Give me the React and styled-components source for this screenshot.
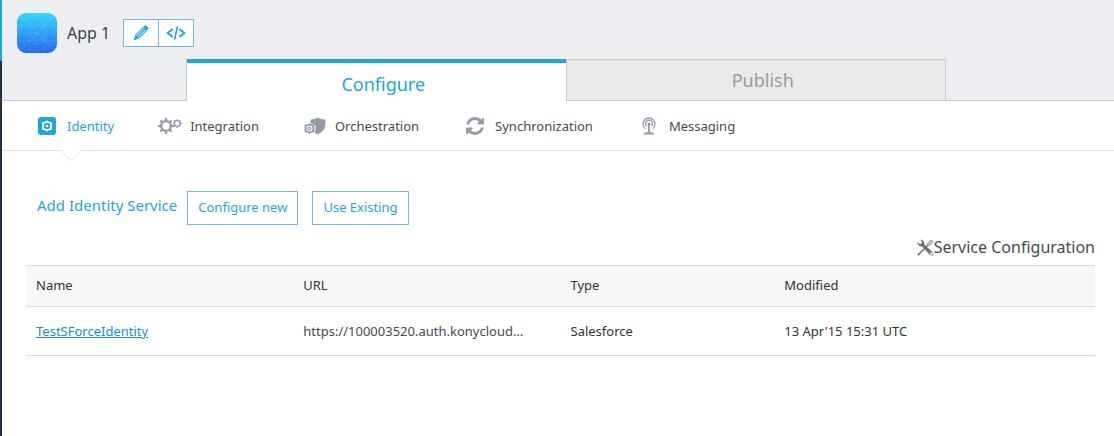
import React from "react";
import styled, { createGlobalStyle } from "styled-components";

const color = {
  accent: "#1ea5da",
  outline: "#74b9e2",
  header: "#edeef2",
  line: "#c6c8ca",
  text: "#4a4a4a",
  icon: "#949ca8",
};

const GlobalStyle = createGlobalStyle`
  *, *::before, *::after { box-sizing: border-box; }
  body { margin: 0; background: #fff; }
  body, button { font-family: "Noto Sans", "Open Sans", sans-serif; }
  h1, h2, p { margin: 0; font-weight: 400; }
  svg { display: block; }
`;

const Page = styled.div`
  display: flex;
  min-height: 100vh;
`;

const Rail = styled.div`
  flex: none;
  width: 2px;
  background: linear-gradient(${color.accent} 61px, #232f3e 61px);
`;

const Main = styled.main`
  flex: 1;
  min-width: 0;
`;

const Header = styled.header`
  background: ${color.header};
`;

const TitleBar = styled.div`
  display: flex;
  align-items: center;
  height: 59px;
  padding: 7px 15px 0;
`;

const AppName = styled.h1`
  margin: 0 13px 0 10px;
  font-size: 16px;
  line-height: 24px;
  color: #3a4149;
`;

const IconButton = styled.button`
  display: flex;
  align-items: center;
  justify-content: center;
  width: 36px;
  height: 28px;
  padding: 0;
  border: 1px solid ${color.outline};
  background: #fff;
  color: ${color.accent};

  & + & {
    margin-left: -1px;
  }
`;

const Tabs = styled.nav`
  display: flex;
  height: 42px;

  &::before,
  &::after {
    content: "";
    flex: none;
    width: 184px;
    border-bottom: 1px solid ${color.line};
  }

  &::after {
    width: 168px;
  }
`;

const Tab = styled.button`
  flex: 1;
  padding: 0 0 0 14px;
  font-size: 18px;
  line-height: 24px;
  border: 1px solid ${color.line};
  background: ${(p) => (p.$active ? "#fff" : "#eaeaea")};
  color: ${(p) => (p.$active ? color.accent : "#9c9c9c")};
  ${(p) =>
    p.$active &&
    `border-width: 0 0 0 1px;
     box-shadow: inset 0 4px ${color.accent};
     padding-top: 8px;`}
`;

const SubNav = styled.nav`
  display: flex;
  gap: 44px;
  height: 50px;
  padding: 0 33px;
  border-bottom: 1px solid #e2e2e2;
`;

const SubNavLink = styled.a`
  position: relative;
  display: flex;
  align-items: center;
  gap: 8px;
  font-size: 13px;
  line-height: 20px;
  text-decoration: none;
  white-space: nowrap;
  color: ${(p) => (p.$active ? color.accent : color.text)};
`;

const IconSlot = styled.span`
  display: flex;
  flex: none;
  justify-content: center;
  width: 24px;
  color: ${color.icon};
`;

const Notch = styled.svg`
  position: absolute;
  left: 26px;
  top: 49px;
`;

const Content = styled.section`
  padding: 40px 19px 0 24px;
`;

const AddRow = styled.div`
  display: flex;
  padding-left: 11px;
`;

const AddTitle = styled.h2`
  margin-right: 10px;
  font-size: 15px;
  line-height: 28px;
  color: ${color.accent};
`;

const OutlineButton = styled.button`
  height: 34px;
  padding: 0 10px 2px;
  font-size: 13px;
  line-height: 20px;
  border: 1px solid ${color.outline};
  background: #fff;
  color: ${color.accent};

  & + & {
    margin-left: 14px;
  }
`;

const ConfigTitle = styled.p`
  display: flex;
  align-items: center;
  justify-content: flex-end;
  margin: 10px 0 6px;
  font-size: 16px;
  line-height: 24px;
  color: ${color.text};
`;

const Table = styled.table`
  width: 100%;
  table-layout: fixed;
  border-collapse: separate;
  border-spacing: 0;
  font-size: 13px;
  line-height: 20px;
  color: #333;
`;

const HeadCell = styled.th`
  width: ${(p) => p.$width};
  height: 42px;
  padding: 0 10px 2px;
  border: solid #d9d9d9;
  border-width: 1px 0;
  background: #f7f7f7;
  font-weight: 400;
  text-align: left;
`;

const Cell = styled.td`
  height: 49px;
  padding: 0 10px;
  border-bottom: 1px solid #d9d9d9;
  color: ${(p) => (p.$muted ? color.text : "inherit")};
  white-space: nowrap;
`;

const ServiceLink = styled.a`
  color: #1b8fc6;
  text-decoration: underline;
`;

function AppIcon() {
  return (
    <svg width="40" height="40" viewBox="0 0 40 40" aria-hidden="true">
      <defs>
        <linearGradient id="appFill" x1="0" y1="0" x2="0" y2="1">
          <stop offset="0" stopColor="#31d6fb" />
          <stop offset="1" stopColor="#2767ee" />
        </linearGradient>
        <clipPath id="appClip">
          <rect width="40" height="40" rx="9" />
        </clipPath>
      </defs>
      <g clipPath="url(#appClip)">
        <rect width="40" height="40" fill="url(#appFill)" />
        <g fill="none" stroke="#fff" strokeOpacity=".13" strokeWidth=".7">
          <path d="M0 0l40 40M40 0L0 40M20 0v40M0 20h40M12.500 0v40M27.500 0v40M0 12.500h40M0 27.500h40" strokeOpacity=".09" />
          <path d="M0 0l40 40M40 0L0 40" />
          <circle cx="20" cy="20" r="18" />
          <circle cx="20" cy="20" r="11" />
          <circle cx="20" cy="20" r="7" />
        </g>
      </g>
    </svg>
  );
}

function PencilIcon() {
  return (
    <svg width="16" height="16" viewBox="0 0 16 16" aria-hidden="true">
      <path d="M.8 15.300l1.300-4.700 3.300 3.200z" fill="currentColor" />
      <path d="M2.300 10.400L10.100 2.300l3.500 3.400-7.800 7.900z" fill="#8fcfea" stroke="currentColor" />
      <path d="M4.100 11.900l7.700-7.800" stroke="currentColor" strokeWidth=".9" />
      <path d="M10.300 2l1.500-1.400q.6-.5 1.200 0l2.200 2.200q.5.600 0 1.200L13.900 5.500z" fill="currentColor" />
    </svg>
  );
}

function CodeIcon() {
  return (
    <svg width="20" height="16" viewBox="0 0 20 16" aria-hidden="true" fill="none" stroke="currentColor" strokeWidth="2">
      <path d="M6.700 4L1.700 8l5 4M13.300 4l5 4-5 4" />
      <path d="M11.400 1.500L8.600 14.500" strokeWidth="1.600" />
    </svg>
  );
}

function gearPath(cx, cy, outer, inner, teeth) {
  const step = (Math.PI * 2) / teeth;
  const at = (r, a) => `${cx + r * Math.sin(a)} ${cy - r * Math.cos(a)}`;
  const points = [];
  for (let i = 0; i < teeth; i += 1) {
    const a = i * step;
    points.push(at(inner, a - step * 0.28), at(outer, a - step * 0.16), at(outer, a + step * 0.16), at(inner, a + step * 0.28));
  }
  return `M${points.join("L")}Z`;
}

function circlePath(cx, cy, r) {
  return `M${cx - r} ${cy}a${r} ${r} 0 1 0 ${2 * r} 0a${r} ${r} 0 1 0 ${-2 * r} 0Z`;
}

function IdentityIcon() {
  return (
    <svg width="18" height="18" viewBox="0 0 18 18" aria-hidden="true">
      <rect width="18" height="18" rx="3" fill={color.accent} />
      <path
        d={"M9 3.200l1.500 1.300 3.500.9v7.200l-3.500.9L9 14.800l-1.500-1.300-3.500-.9V5.400l3.500-.9z" + circlePath(9, 9, 3.200)}
        fill="#fff"
        fillRule="evenodd"
      />
      <circle cx="9" cy="9" r="1.300" fill="#fff" />
    </svg>
  );
}

function GearsIcon() {
  return (
    <svg width="24" height="16" viewBox="0 0 24 16" aria-hidden="true" fill="currentColor" fillRule="evenodd">
      <path d={gearPath(8, 8, 8, 6, 8) + circlePath(8, 8, 3.7)} />
      <path d={gearPath(19.300, 5.500, 4.600, 3.500, 8) + circlePath(19.300, 5.500, 2.200)} />
    </svg>
  );
}

function ShieldIcon() {
  return (
    <svg width="22" height="18" viewBox="0 0 22 18" aria-hidden="true" fill="currentColor">
      <path d="M13.700.5Q17 2.600 21.300 2.400v5.200q0 6.400-7.600 9.900-2.200-1-3.200-2l.9-1.600.3-5.200-2.600-1.500L6.500 6V2.400q4 .2 7.200-1.900z" />
      <path
        d={"M5.500 6.100l1.600 1.100 3.300.7v7.200l-3.300.7-1.600 1.200-1.600-1.200-3.300-.7V7.900l3.300-.7z" + circlePath(5.500, 11.500, 3)}
        fillRule="evenodd"
      />
      <path d={circlePath(5.500, 11.500, 2) + circlePath(5.500, 11.500, 0.8)} fillRule="evenodd" />
    </svg>
  );
}

function RefreshIcon() {
  return (
    <svg width="18" height="18" viewBox="0 0 1536 1536" aria-hidden="true" fill="currentColor">
      <path d="M1511 928q0 5-1 7-64 268-268 434.500T764 1536q-146 0-282.500-55T238 1324l-129 129q-19 19-45 19t-45-19-19-45V960q0-26 19-45t45-19h448q26 0 45 19t19 45-19 45l-137 137q71 66 161 102t187 36q134 0 250-65t186-179q11-17 53-117 8-23 30-23h192q13 0 22.500 9.500t9.500 22.500zm25-800v448q0 26-19 45t-45 19h-448q-26 0-45-19t-19-45 19-45l138-138Q969 256 768 256q-134 0-250 65T332 500q-11 17-53 117-8 23-30 23H50q-13 0-22.500-9.500T18 608v-7q65-268 270-434.500T768 0q146 0 284 55.500T1297 212l130-129q19-19 45-19t45 19 19 45z" />
    </svg>
  );
}

function BroadcastIcon() {
  return (
    <svg width="14" height="18" viewBox="0 0 14 18" aria-hidden="true" fill="none" stroke="currentColor">
      <path d="M3.300 11.700a6 6 0 1 1 7.400 0" strokeWidth="1.300" />
      <path d="M4.600 9.300a3.500 3.500 0 1 1 4.800 0" strokeWidth="1.300" />
      <circle cx="7" cy="6.900" r="1.500" fill="currentColor" stroke="none" />
      <path d="M7 7v9" strokeWidth="1.800" />
      <path d="M2 17q1-1.300 3.500-1.300h3Q11 15.700 12 17z" fill="currentColor" />
    </svg>
  );
}

function ToolsIcon() {
  return (
    <svg width="17" height="17" viewBox="0 0 17 17" aria-hidden="true">
      <path d="M10.200 4.900L14 1l2.100 2.100-3.900 3.900z" fill="#c4c4c4" stroke="#8a8a8a" strokeWidth=".8" />
      <path d="M10.800 6.200L1.400 15.600" stroke="#777" strokeWidth="1.500" />
      <path d="M.6 16.400l.5-2.100 1.600 1.600z" fill="#555" />
      <path
        d="M3.300.6l2 .3 1.800 2.200.1 2.200 8.300 8q1.300 1.500.2 2.700-1.200 1.200-2.700-.1L5.100 7.500l-2.200-.2L.7 5.200.5 3.300l2.300 1.600 1.700-.3.300-1.600z"
        fill="#707070"
      />
      <circle cx="14.300" cy="14.600" r="1.200" fill="#fff" />
    </svg>
  );
}

const sections = [
  { label: "Identity", icon: <IdentityIcon />, active: true },
  { label: "Integration", icon: <GearsIcon /> },
  { label: "Orchestration", icon: <ShieldIcon /> },
  { label: "Synchronization", icon: <RefreshIcon /> },
  { label: "Messaging", icon: <BroadcastIcon /> },
];

const services = [
  {
    name: "TestSForceIdentity",
    url: "https://100003520.auth.konycloud…",
    type: "Salesforce",
    modified: "13 Apr'15 15:31 UTC",
  },
];

export default function App() {
  return (
    <>
      <GlobalStyle />
      <Page>
        <Rail />
        <Main>
          <Header>
            <TitleBar>
              <AppIcon />
              <AppName>App 1</AppName>
              <IconButton type="button" aria-label="Edit">
                <PencilIcon />
              </IconButton>
              <IconButton type="button" aria-label="Code">
                <CodeIcon />
              </IconButton>
            </TitleBar>
            <Tabs>
              <Tab type="button" $active>
                Configure
              </Tab>
              <Tab type="button">Publish</Tab>
            </Tabs>
          </Header>
          <SubNav>
            {sections.map((s) => (
              <SubNavLink key={s.label} href="#" $active={s.active}>
                <IconSlot>{s.icon}</IconSlot>
                {s.label}
                {s.active && (
                  <Notch width="20" height="12" viewBox="0 0 20 12" aria-hidden="true">
                    <path d="M0 0h20L10 10.500z" fill="#fff" />
                    <path d="M0 .5l10 10 10-10" fill="none" stroke="#e2e2e2" />
                  </Notch>
                )}
              </SubNavLink>
            ))}
          </SubNav>
          <Content>
            <AddRow>
              <AddTitle>Add Identity Service</AddTitle>
              <OutlineButton type="button">Configure new</OutlineButton>
              <OutlineButton type="button">Use Existing</OutlineButton>
            </AddRow>
            <ConfigTitle>
              <ToolsIcon />
              Service Configuration
            </ConfigTitle>
            <Table>
              <thead>
                <tr>
                  <HeadCell $width="25%">Name</HeadCell>
                  <HeadCell $width="25%">URL</HeadCell>
                  <HeadCell $width="20%">Type</HeadCell>
                  <HeadCell $width="30%">Modified</HeadCell>
                </tr>
              </thead>
              <tbody>
                {services.map((s) => (
                  <tr key={s.name}>
                    <Cell>
                      <ServiceLink href="#">{s.name}</ServiceLink>
                    </Cell>
                    <Cell $muted>{s.url}</Cell>
                    <Cell>{s.type}</Cell>
                    <Cell>{s.modified}</Cell>
                  </tr>
                ))}
              </tbody>
            </Table>
          </Content>
        </Main>
      </Page>
    </>
  );
}
